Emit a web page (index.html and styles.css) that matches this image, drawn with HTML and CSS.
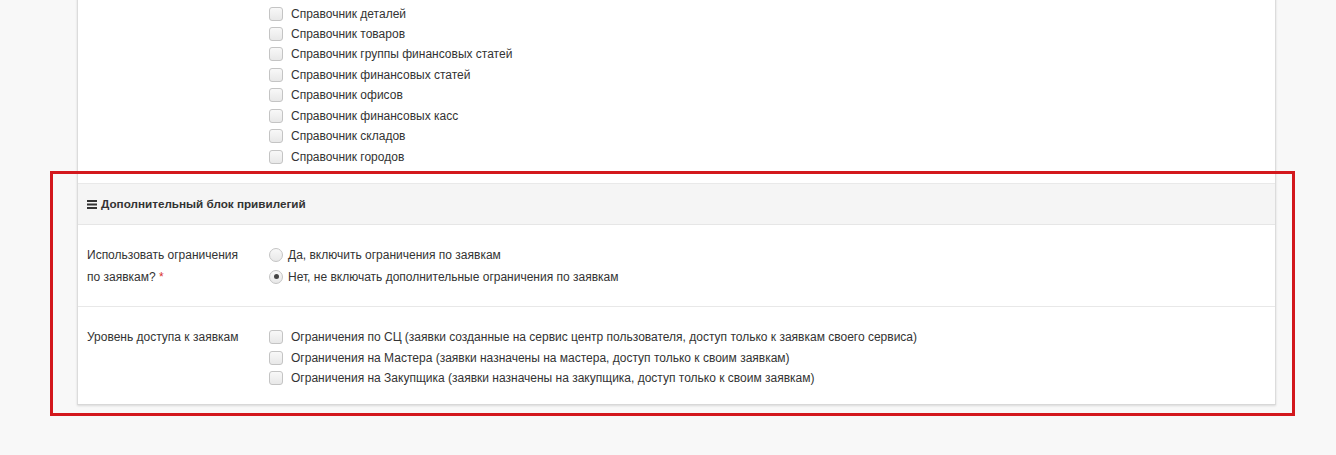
FILE: index.html
```html
<!DOCTYPE html>
<html lang="ru">
<head>
<meta charset="utf-8">
<title>Привилегии</title>
<link rel="stylesheet" href="styles.css">
</head>
<body>
<div class="card">
  <div class="top-section">
    <div class="list">
      <div class="check"><span class="box"></span></div>
      <label class="check"><span class="box"></span><span>Справочник деталей</span></label>
      <label class="check"><span class="box"></span><span>Справочник товаров</span></label>
      <label class="check"><span class="box"></span><span>Справочник группы финансовых статей</span></label>
      <label class="check"><span class="box"></span><span>Справочник финансовых статей</span></label>
      <label class="check"><span class="box"></span><span>Справочник офисов</span></label>
      <label class="check"><span class="box"></span><span>Справочник финансовых касс</span></label>
      <label class="check"><span class="box"></span><span>Справочник складов</span></label>
      <label class="check"><span class="box"></span><span>Справочник городов</span></label>
    </div>
  </div>

  <div class="panel-heading">
    <svg class="hamb" width="10" height="9" viewBox="0 0 10 9"><rect x="0" y="0" width="10" height="2" fill="#333"/><rect x="0" y="3.5" width="10" height="2" fill="#333"/><rect x="0" y="7" width="10" height="2" fill="#333"/></svg>
    <span>Дополнительный блок привилегий</span>
  </div>

  <div class="form-row row-radio">
    <div class="row-label">Использовать ограничения<br>по заявкам? <span class="req">*</span></div>
    <div class="row-controls">
      <label class="radio"><span class="circle"></span><span>Да, включить ограничения по заявкам</span></label>
      <label class="radio"><span class="circle checked"></span><span>Нет, не включать дополнительные ограничения по заявкам</span></label>
    </div>
  </div>

  <div class="form-row row-check">
    <div class="row-label">Уровень доступа к заявкам</div>
    <div class="row-controls">
      <label class="check"><span class="box"></span><span>Ограничения по СЦ (заявки созданные на сервис центр пользователя, доступ только к заявкам своего сервиса)</span></label>
      <label class="check"><span class="box"></span><span>Ограничения на Мастера (заявки назначены на мастера, доступ только к своим заявкам)</span></label>
      <label class="check"><span class="box"></span><span>Ограничения на Закупщика (заявки назначены на закупщика, доступ только к своим заявкам)</span></label>
    </div>
  </div>
</div>
<div class="highlight"></div>
</body>
</html>
```

FILE: styles.css
```css
html, body {
  margin: 0;
  padding: 0;
}
body {
  background: #f8f8f8;
  font-family: "Liberation Sans", Arial, sans-serif;
  font-size: 12px;
  color: #333;
  height: 455px;
  overflow: hidden;
  position: relative;
}
.card {
  margin: -27px 0 0 77px;
  width: 1197px;
  background: #fff;
  border-left: 1px solid #dcdcdc;
  border-right: 1px solid #dcdcdc;
  border-bottom: 1px solid #d8d8d8;
  box-shadow: 0 1px 2px rgba(0, 0, 0, 0.12);
}
.top-section {
  padding: 10px 0 16px 191px;
}
.list {
  display: flex;
  flex-direction: column;
}
.check {
  display: flex;
  align-items: center;
  height: 20.43px;
  gap: 8px;
  white-space: nowrap;
}
.box {
  width: 12px;
  height: 12px;
  flex: none;
  border: 1px solid #c4c4c4;
  border-radius: 3px;
  background: linear-gradient(#f8f8f8, #e8e8e8);
}
.panel-heading {
  height: 40px;
  border-top: 1px solid #e9e9e9;
  border-bottom: 1px solid #e6e6e6;
  background: #f5f5f5;
  display: flex;
  align-items: center;
  padding-left: 9px;
  gap: 4px;
  font-weight: bold;
  font-size: 11.7px;
  color: #333;
}
.hamb {
  flex: none;
  margin-top: 1px;
}
.form-row {
  display: grid;
  grid-template-columns: 182px 1fr;
  padding-left: 9px;
}
.row-radio {
  padding-top: 19px;
  padding-bottom: 18px;
  border-bottom: 1px solid #e8e8e8;
}
.row-radio .row-label {
  line-height: 22px;
}
.row-check {
  padding-top: 20px;
  padding-bottom: 16px;
}
.row-check .row-label {
  line-height: 20.5px;
}
.row-check .check {
  height: 20.5px;
}
.req {
  color: #d9302c;
}
.radio {
  display: flex;
  align-items: center;
  height: 22px;
  gap: 5px;
  white-space: nowrap;
}
.circle {
  width: 12px;
  height: 12px;
  flex: none;
  border: 1px solid #c4c4c4;
  border-radius: 50%;
  background: linear-gradient(#f8f8f8, #e8e8e8);
  display: flex;
  align-items: center;
  justify-content: center;
}
.circle.checked::after {
  content: "";
  width: 5px;
  height: 5px;
  border-radius: 50%;
  background: #444;
}
.highlight {
  position: absolute;
  left: 50px;
  top: 171px;
  width: 1239px;
  height: 239px;
  border: 3px solid #d3181d;
}
```
